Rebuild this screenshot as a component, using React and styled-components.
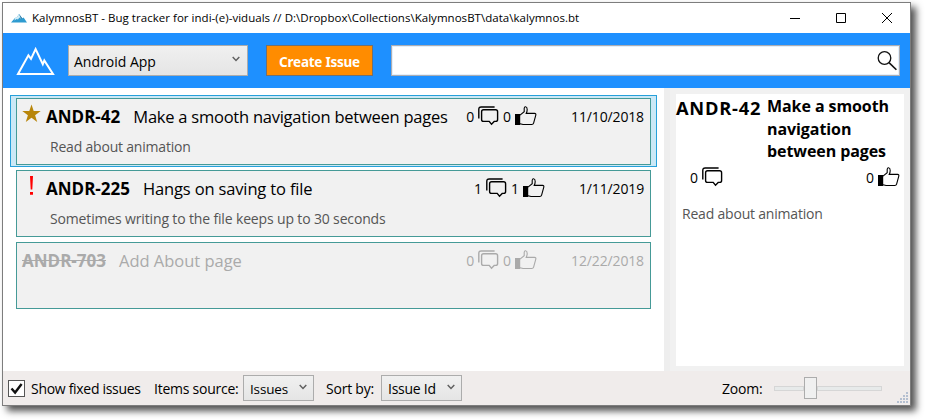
import React from 'react';
import styled, { createGlobalStyle } from 'styled-components';

const Global = createGlobalStyle`
  * { box-sizing: border-box; }
  body { margin: 0; background: #fff; font-family: "Open Sans", "Noto Sans", sans-serif; font-size: 14px; color: #000; overflow: hidden; }
  svg { display: block; flex: none; }
`;

const Page = styled.div`width: 925px; height: 420px; padding: 2px;`;
const Window = styled.div`
  width: 909px; height: 404px; border: 1px solid #7d7d7d; background: #fff;
  display: flex; flex-direction: column;
  box-shadow: 5px 5px 7px rgba(0, 0, 0, 0.68);
`;
const Label = styled.span`
  white-space: pre; flex: none;
  font-size: ${p => p.$size || 14}px;
  font-weight: ${p => (p.$bold ? 700 : 400)};
  letter-spacing: ${p => p.$track || 0}px;
  line-height: ${p => p.$line || 20}px;
`;

const TitleBar = styled.div`height: 30px; display: flex; align-items: center; padding-left: 8px; flex: none;`;
const TitleText = styled(Label)`margin-left: 5px; flex: 1;`;
const WindowButtons = styled.div`display: flex; gap: 36px; padding-right: 18px;`;

const Header = styled.div`
  height: 55px; background: #1e90ff; display: flex; align-items: center; flex: none;
  padding: 0 10px 0 13px;
`;
const Combo = styled.div`
  width: ${p => p.$width}px; height: ${p => p.$height}px;
  margin-left: ${p => p.$gap}px; padding: 2px ${p => p.$right || 4}px 0 ${p => p.$left || 7}px;
  border: 1px solid #acacac; background: linear-gradient(#f0f0f0, #e5e5e5);
  display: flex; align-items: center; justify-content: space-between;
`;
const Chevron = styled.svg`margin-top: -5px;`;
const CreateButton = styled.button`
  width: 107px; height: 31px; margin-left: 18px; padding: 2px 0 0;
  border: 1px solid #707070; background: #ff8c00; color: #fff;
  font: 700 13.5px/20px "Noto Sans", sans-serif; letter-spacing: -0.24px;
`;
const Search = styled.div`
  flex: 1; height: 31px; margin-left: 18px; border: 1px solid #abadb3; background: #fff;
  box-shadow: inset 0 0 0 1px #e3effb;
  display: flex; align-items: center; justify-content: flex-end; padding-right: 1px;
`;

const Content = styled.div`height: 283px; display: flex; flex: none;`;
const IssueList = styled.div`width: 661px; padding: 7px 7px 0;`;
const Item = styled.div`
  height: 72px; padding: 2px 5px;
  border: 1px solid ${p => (p.$selected ? '#26a0da' : 'transparent')};
  background: ${p => (p.$selected ? '#cbe8f6' : 'transparent')};
`;
const Card = styled.div`
  height: 67px; border: 1px solid #459a97; background: #f1f1f1; padding: 5px 6px 0 5px;
  color: ${p => (p.$fixed ? '#aaa' : '#000')};
`;
const Row = styled.div`
  display: flex; align-items: center; height: 24px;
  & > span, & > div > span { padding-top: 2px; }
`;
const MarkSlot = styled.div`width: 24px; height: 24px; flex: none;`;
const IssueId = styled(Label)`text-decoration: ${p => (p.$fixed ? 'line-through' : 'none')};`;
const IssueTitle = styled(Label)`margin-left: 13px; flex: 1;`;
const Counter = styled.div`display: flex; align-items: center; gap: 4px; margin-left: ${p => p.$left || 0}px;`;
const DateText = styled(Label)`margin-left: 34px;`;
const Description = styled.div`
  margin: 9px 0 0 28px; color: #555; font-size: 14px; line-height: 20px;
  letter-spacing: ${p => p.$track || -0.2}px; white-space: nowrap;
`;

const DetailPane = styled.div`flex: 1; background: #f1f1f1; border-left: 6px solid #eee; padding: 6px 6px 5px;`;
const Detail = styled.div`height: 272px; background: #fff;`;
const DetailHead = styled.div`display: flex; height: 68px;`;
const DetailId = styled(Label)`margin-top: 2px; width: 91px;`;
const DetailTitle = styled(Label)`white-space: normal; width: 126px; padding-top: 1px;`;
const DetailCounts = styled.div`
  display: flex; justify-content: space-between; padding: 4px 4px 0 14px;
  span { padding-top: 2px; }
`;
const DetailText = styled(Description)`margin: 16px 0 0 6px;`;

const StatusBar = styled.div`
  height: 33px; flex: 1; background: #f0eceb; display: flex; align-items: center;
  padding: 0 1px 0 5px;
`;
const CheckBox = styled.div`width: 17px; height: 17px; border: 1px solid #555; background: #fff;`;
const Caption = styled(Label)`margin-left: ${p => p.$left}px; padding-top: 2px; width: ${p => p.$width}px;`;
const Spacer = styled.div`flex: 1;`;
const Slider = styled.div`width: 108px; height: 22px; display: flex; align-items: center; margin-left: 11px;`;
const Track = styled.div`height: 5px; border: 1px solid #d6d6d6; background: #e7eaea; width: ${p => p.$width}px;`;
const Thumb = styled.div`width: 13px; height: 22px; border: 1px solid #acacac; background: #f0f0f0;`;
const Grip = styled.svg`margin-left: 15px; align-self: flex-end; margin-bottom: 1px;`;

const SmallLogo = () => (
  <svg width="16" height="10" viewBox="0 0 16 10">
    <path d="M0 9.5 4.2 4.7 5.4 5 8 1l3.2 4.2 1.4-.8L16 9.5z" fill="#2e9bd0" />
    <path d="M4.2 4.7 5.4 5 8 1l3.2 4.2-1.2.6-1.6-1.3L7 6.5 5.6 6 3.4 7.5z" fill="#d3edf6" />
    <path d="m8 1 3.2 4.2L10 6z" fill="#1f6f9f" />
  </svg>
);
const Logo = () => (
  <svg width="39" height="30" viewBox="0 0 39 30" fill="none" stroke="#fff" strokeWidth="2">
    <path d="M2 28 12.4 9.3l2.6 3.5L19.6 3l7.2 15.3 1.5-3.8L37 28z" />
  </svg>
);
const Arrow = () => (
  <Chevron width="8" height="6" viewBox="0 0 8 6" fill="none" stroke="#606060" strokeWidth="1.5">
    <path d="M.7 1 4 4.4 7.3 1" />
  </Chevron>
);
const Star = () => (
  <svg width="19" height="20" viewBox="0 0 19 20">
    <path d="m9.5.5 2.2 6.6h7l-5.6 4.1 2.1 6.8-5.7-4.2-5.7 4.2 2.1-6.8L.3 7.1h7z" fill="#b8860b" />
  </svg>
);
const Alert = () => (
  <svg width="19" height="20" viewBox="0 0 19 20" fill="#f00">
    <path d="M8 0h3l-.7 13.4H8.7zM8 16h3v2.8H8z" />
  </svg>
);
const Comments = () => (
  <svg width="21" height="20" viewBox="0 0 21 20" fill="none" stroke="currentColor" strokeWidth="1.4">
    <path d="M.8 12.6V3.4Q.8 1 3.2 1H16.6" />
    <path d="M5.6 3.8h12q2 0 2 2v7.6q0 2-2 2h-1.4l-2.7 2.8-2.3-2.8H5.6q-2 0-2-2V5.8q0-2 2-2z" />
  </svg>
);
const Thumbs = () => (
  <svg width="22" height="20" viewBox="0 0 22 20" fill="none" stroke="currentColor" strokeWidth="1.1">
    <path d="M0 8h5.2v11H0z" fill="currentColor" stroke="none" />
    <path d="M5 9.2 9.2 5.7V2.2Q9.4.7 10.6.8q1.6.2 1.6 2.6 0 2-1 4h8.4q1.6.2 1.2 1.7l-2.2 8q-.4 1.4-1.8 1.4H8L5 17.7" />
  </svg>
);

const marks = { star: <Star />, alert: <Alert /> };
const issues = [
  { id: 'ANDR-42', mark: 'star', title: 'Make a smooth navigation between pages', tt: -0.24, text: 'Read about animation', n: 0, date: '11/10/2018', selected: true },
  { id: 'ANDR-225', mark: 'alert', title: 'Hangs on saving to file', tt: -0.15, text: 'Sometimes writing to the file keeps up to 30 seconds', track: -0.15, n: 1, date: '1/11/2019' },
  { id: 'ANDR-703', title: 'Add About page', tt: -0.02, n: 0, date: '12/22/2018', fixed: true },
];

const Issue = ({ item }) => (
  <Item $selected={item.selected}>
    <Card $fixed={item.fixed}>
      <Row>
        {item.mark && <MarkSlot>{marks[item.mark]}</MarkSlot>}
        <IssueId $bold $size={17} $line={24} $fixed={item.fixed}>{item.id}</IssueId>
        <IssueTitle $size={16.5} $line={24} $track={item.tt}>{item.title}</IssueTitle>
        <Counter><Label $track={-0.14}>{item.n}</Label><Comments /></Counter>
        <Counter $left={4}><Label>{item.n}</Label><Thumbs /></Counter>
        <DateText $track={-0.14}>{item.date}</DateText>
      </Row>
      {item.text && <Description $track={item.track}>{item.text}</Description>}
    </Card>
  </Item>
);

export default function App() {
  return (
    <Page>
      <Global />
      <Window>
        <TitleBar>
          <SmallLogo />
          <TitleText $size={11.5} $track={0.03}>{'KalymnosBT - Bug tracker for indi-(e)-viduals // D:\\Dropbox\\Collections\\KalymnosBT\\data\\kalymnos.bt'}</TitleText>
          <WindowButtons>
            <svg width="10" height="10" stroke="#000"><path d="M0 5.5h10" /></svg>
            <svg width="10" height="10" fill="none" stroke="#000"><path d="M.5.5h9v9h-9z" /></svg>
            <svg width="10" height="10" stroke="#000"><path d="m0 0 10 10M10 0 0 10" /></svg>
          </WindowButtons>
        </TitleBar>
        <Header>
          <Logo />
          <Combo $width={180} $height={31} $gap={13} $left={5} $right={7}>
            <Label $line={25}>Android App</Label><Arrow />
          </Combo>
          <CreateButton>Create Issue</CreateButton>
          <Search>
            <svg width="22" height="22" viewBox="0 0 22 22" fill="none" stroke="#111" strokeWidth="1.3">
              <circle cx="8.5" cy="8" r="6.3" /><path d="m13 12.6 7.4 7.2" strokeWidth="1.6" />
            </svg>
          </Search>
        </Header>
        <Content>
          <IssueList>{issues.map(i => <Issue key={i.id} item={i} />)}</IssueList>
          <DetailPane>
            <Detail>
              <DetailHead>
                <DetailId $bold $size={18.3} $line={24} $track={0.75}>ANDR-42</DetailId>
                <DetailTitle $bold $size={16} $line={22.5} $track={-0.08}>Make a smooth navigation between pages</DetailTitle>
              </DetailHead>
              <DetailCounts>
                <Counter><Label>0</Label><Comments /></Counter>
                <Counter><Label>0</Label><Thumbs /></Counter>
              </DetailCounts>
              <DetailText>Read about animation</DetailText>
            </Detail>
          </DetailPane>
        </Content>
        <StatusBar>
          <CheckBox>
            <svg width="15" height="15" viewBox="0 0 15 15" fill="none" stroke="#111" strokeWidth="2.4"><path d="m2.5 7.5 3.6 4L12.6 3" /></svg>
          </CheckBox>
          <Caption $left={6} $width={111} $track={-0.3}>Show fixed issues</Caption>
          <Caption $left={12} $width={84} $track={-0.25}>Items source:</Caption>
          <Combo $width={71} $height={26} $gap={5} $left={6} $right={6}><Label $size={13.5} $track={-0.15}>Issues</Label><Arrow /></Combo>
          <Caption $left={12} $width={49} $track={-0.22}>Sort by:</Caption>
          <Combo $width={81} $height={26} $gap={6} $left={6} $right={6}><Label $track={-0.25}>Issue Id</Label><Arrow /></Combo>
          <Spacer />
          <Caption $left={0} $width={41} $track={-0.2}>Zoom:</Caption>
          <Slider><Track $width={30} /><Thumb /><Track $width={65} /></Slider>
          <Grip width="12" height="12" fill="#b4bfd0">
            {[[9, 0], [6, 3], [9, 3], [3, 6], [6, 6], [9, 6], [0, 9], [3, 9], [6, 9], [9, 9]].map(([x, y]) => (
              <rect key={`${x}-${y}`} x={x} y={y} width="2" height="2" />
            ))}
          </Grip>
        </StatusBar>
      </Window>
    </Page>
  );
}
